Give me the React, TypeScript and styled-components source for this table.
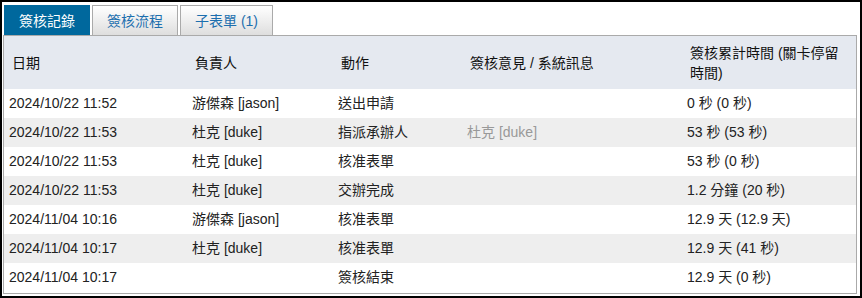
import styled, { createGlobalStyle } from "styled-components";

const GlobalStyle = createGlobalStyle`
    html, body {
        margin: 0;
        padding: 0;
        background: #ffffff;
    }
    body {
        font-family: "Liberation Sans", Arial, "Noto Sans CJK TC", sans-serif;
        font-size: 14px;
        color: #222222;
    }
`;

const Frame = styled.div`
    box-sizing: border-box;
    width: 862px;
    height: 298px;
    border: 2px solid #000000;
    padding: 3px 3px 2px 1px;
    display: flex;
    flex-direction: column;
`;

const TabBar = styled.div`
    display: flex;
    gap: 2px;
    padding-left: 1px;
`;

const Tab = styled.div<{ $active?: boolean; }>`
    box-sizing: border-box;
    height: 30px;
    padding: 0 14px;
    display: flex;
    align-items: center;
    border: 1px solid ${props => props.$active ? "#00689d" : "#aaaaaa"};
    border-bottom: none;
    background: ${props => props.$active ? "#00689d" : "linear-gradient(#ffffff, #dedede)"};
    color: ${props => props.$active ? "#ffffff" : "#1c6fae"};
    font-size: 14px;
    line-height: 16px;
`;

const Panel = styled.div`
    flex: 1;
    border: 1px solid #aaaaaa;
    overflow: hidden;
`;

const Table = styled.table`
    width: 100%;
    border-collapse: collapse;
    table-layout: fixed;
`;

const HeadCell = styled.th<{ $width: number; }>`
    width: ${props => props.$width}px;
    height: 53px;
    box-sizing: border-box;
    padding: 0 5px 0 8px;
    background: #e5e9f0;
    text-align: left;
    font-weight: normal;
    color: #111111;
    line-height: 20px;
    vertical-align: middle;
`;

const Row = styled.tr<{ $shaded?: boolean; }>`
    background: ${props => props.$shaded ? "#eeeeee" : "#ffffff"};
`;

const Cell = styled.td<{ $muted?: boolean; }>`
    height: 29px;
    box-sizing: border-box;
    padding: 0 5px;
    line-height: 19px;
    white-space: nowrap;
    color: ${props => props.$muted ? "#999999" : "#222222"};
`;

type Entry = {
    date: string;
    person: string;
    action: string;
    note: string;
    elapsed: string;
};

const columns = [
    { label: "日期", width: 183 },
    { label: "負責人", width: 146 },
    { label: "動作", width: 129 },
    { label: "簽核意見 / 系統訊息", width: 220 },
    { label: "簽核累計時間 (關卡停留時間)", width: 174 },
];

const entries: Entry[] = [
    { date: "2024/10/22 11:52", person: "游傑森 [jason]", action: "送出申請", note: "", elapsed: "0 秒 (0 秒)" },
    { date: "2024/10/22 11:53", person: "杜克 [duke]", action: "指派承辦人", note: "杜克 [duke]", elapsed: "53 秒 (53 秒)" },
    { date: "2024/10/22 11:53", person: "杜克 [duke]", action: "核准表單", note: "", elapsed: "53 秒 (0 秒)" },
    { date: "2024/10/22 11:53", person: "杜克 [duke]", action: "交辦完成", note: "", elapsed: "1.2 分鐘 (20 秒)" },
    { date: "2024/11/04 10:16", person: "游傑森 [jason]", action: "核准表單", note: "", elapsed: "12.9 天 (12.9 天)" },
    { date: "2024/11/04 10:17", person: "杜克 [duke]", action: "核准表單", note: "", elapsed: "12.9 天 (41 秒)" },
    { date: "2024/11/04 10:17", person: "", action: "簽核結束", note: "", elapsed: "12.9 天 (0 秒)" },
];

const tabs = ["簽核記錄", "簽核流程", "子表單 (1)"];

const App: React.FC = () => {
    return (
        <>
            <GlobalStyle />
            <Frame>
                <TabBar>
                    {tabs.map((t, i) => (
                        <Tab key={t} $active={i === 0}>{t}</Tab>
                    ))}
                </TabBar>
                <Panel>
                    <Table>
                        <thead>
                            <tr>
                                {columns.map(c => (
                                    <HeadCell key={c.label} $width={c.width}>{c.label}</HeadCell>
                                ))}
                            </tr>
                        </thead>
                        <tbody>
                            {entries.map((e, i) => (
                                <Row key={i} $shaded={i % 2 === 1}>
                                    <Cell>{e.date}</Cell>
                                    <Cell>{e.person}</Cell>
                                    <Cell>{e.action}</Cell>
                                    <Cell $muted>{e.note}</Cell>
                                    <Cell>{e.elapsed}</Cell>
                                </Row>
                            ))}
                        </tbody>
                    </Table>
                </Panel>
            </Frame>
        </>
    );
};

export default App;
